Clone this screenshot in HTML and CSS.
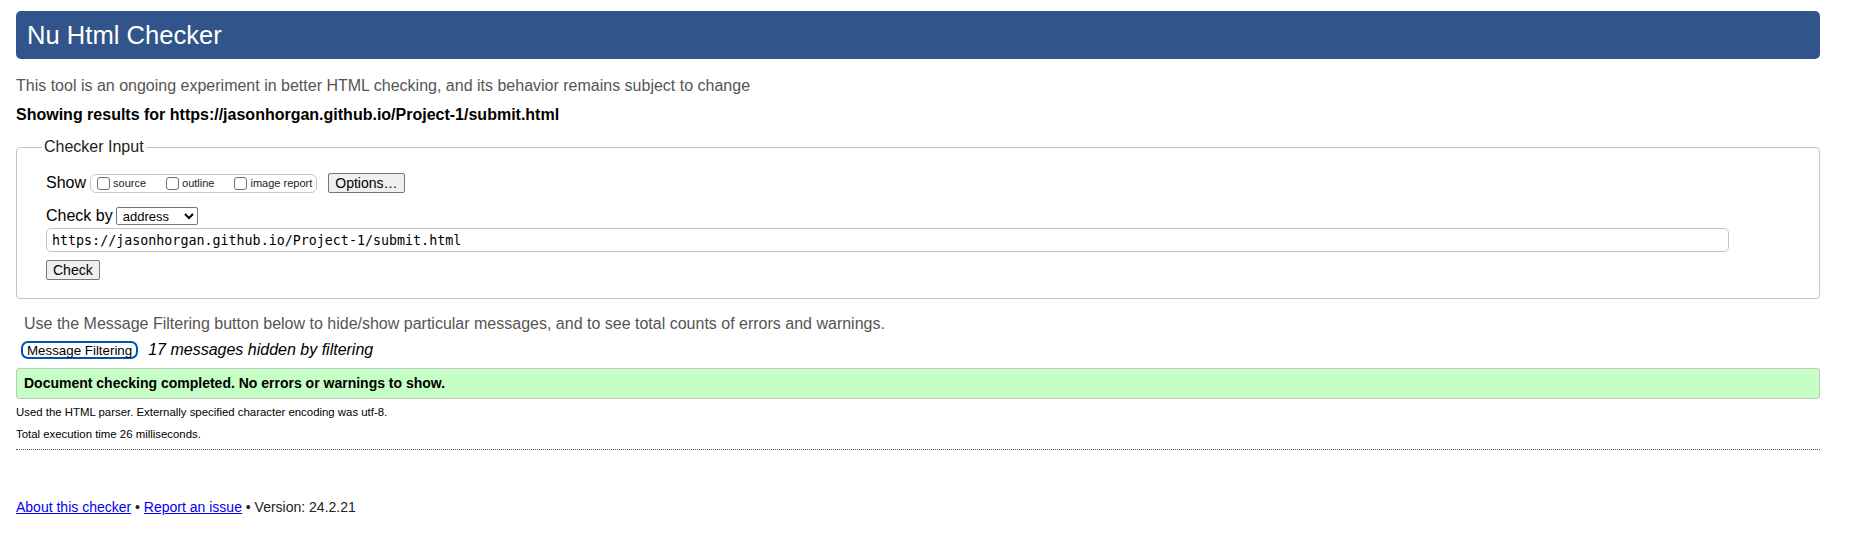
FILE: index.html
```html
<!DOCTYPE html>
<html lang="en">
<head>
<meta charset="utf-8">
<title>Nu Html Checker</title>
<link rel="stylesheet" href="styles.css">
</head>
<body>
<h1 class="title">Nu Html Checker</h1>
<p class="intro">This tool is an ongoing experiment in better HTML checking, and its behavior remains subject to change</p>
<p class="showing">Showing results for https://jasonhorgan.github.io/Project-1/submit.html</p>
<form class="checker">
  <fieldset class="input-box">
    <legend class="legend">Checker Input</legend>
    <div class="row show-row">
      <span class="lbl">Show</span>
      <span class="opts">
        <label class="opt"><input type="checkbox" class="cb"><span>source</span></label>
        <label class="opt"><input type="checkbox" class="cb"><span>outline</span></label>
        <label class="opt"><input type="checkbox" class="cb"><span>image report</span></label>
      </span>
      <button type="button" class="btn options">Options…</button>
    </div>
    <div class="row by-row">
      <span class="lbl">Check by</span>
      <select class="sel"><option>address</option></select>
    </div>
    <input class="url" type="text" value="https://jasonhorgan.github.io/Project-1/submit.html">
    <div class="row">
      <button type="button" class="btn check">Check</button>
    </div>
  </fieldset>
</form>
<p class="filter-note">Use the Message Filtering button below to hide/show particular messages, and to see total counts of errors and warnings.</p>
<div class="filter-row">
  <button type="button" class="filter-btn">Message Filtering</button>
  <em class="hidden-count">17 messages hidden by filtering</em>
</div>
<div class="success">Document checking completed. No errors or warnings to show.</div>
<p class="meta">Used the HTML parser. Externally specified character encoding was utf-8.</p>
<p class="meta">Total execution time 26 milliseconds.</p>
<hr class="rule">
<p class="footer"><a href="#">About this checker</a> • <a href="#">Report an issue</a> • Version: 24.2.21</p>
</body>
</html>
```
FILE: styles.css
```css
html { background: #fff; }
body {
  margin: 11px 35px 0 16px;
  font-family: "Liberation Sans", Arial, sans-serif;
  color: #000;
}
.title {
  margin: 0;
  height: 48px;
  line-height: 48px;
  padding: 0 11px;
  background: #31558b;
  color: #fff;
  border-radius: 5px;
  font-size: 25.6px;
  font-weight: normal;
}
.intro {
  margin: 0;
  padding-top: 17px;
  font-size: 16px;
  line-height: 20px;
  color: #555;
}
.showing {
  margin: 0;
  padding-top: 9px;
  font-size: 16px;
  line-height: 20px;
  font-weight: bold;
}
.checker { margin: 0; padding-top: 13px; }
.input-box {
  margin: 0;
  border: 1px solid #c4c4c4;
  border-radius: 4px;
  padding: 6px 90px 18px 29px;
  min-width: 0;
}
.legend {
  margin-left: -4px;
  padding: 0 2px;
  font-size: 16px;
  color: #222;
}
.row {
  display: flex;
  align-items: center;
}
.show-row { height: 22px; margin-top: 10px; }
.by-row { height: 20px; margin-top: 12px; }
.lbl { font-size: 16px; margin-right: 3px; }
.opts {
  display: inline-flex;
  align-items: center;
  box-sizing: border-box;
  height: 19px;
  border: 1px solid #c8c8c8;
  border-radius: 6px;
  padding: 0 4px 0 2px;
  margin-left: 1px;
  margin-right: 11px;
}
.opt {
  display: inline-flex;
  align-items: center;
  font-size: 11px;
  color: #222;
  margin-right: 16px;
}
.opt:last-child { margin-right: 0; }
.cb {
  -webkit-appearance: none;
  appearance: none;
  box-sizing: border-box;
  margin: 0 3px 0 4px;
  width: 13px;
  height: 13px;
  border: 1px solid #6f6f6f;
  border-radius: 3px;
  background: #fff;
}
.btn {
  font-family: "Liberation Sans", Arial, sans-serif;
  font-size: 14px;
  height: 20px;
  padding: 0 6px;
  background: #efefef;
  border: 1px solid #767676;
  border-radius: 2px;
  color: #000;
}
.sel {
  font-family: "Liberation Sans", Arial, sans-serif;
  font-size: 13px;
  width: 82px;
  height: 18px;
  padding: 0 2px;
  border: 1px solid #767676;
  border-radius: 2px;
  background: #fff;
  color: #000;
}
.url {
  display: block;
  box-sizing: border-box;
  width: 100%;
  height: 24px;
  margin-top: 2px;
  padding: 0 5px;
  border: 1px solid #c4c4c4;
  border-radius: 5px;
  font-family: "DejaVu Sans Mono", "Liberation Mono", monospace;
  font-size: 13.33px;
  color: #000;
}
.check { margin-top: 8px; }
.filter-note {
  margin: 0;
  padding: 15px 0 0 8px;
  font-size: 16px;
  line-height: 20px;
  color: #555;
}
.filter-row {
  display: flex;
  align-items: center;
  padding: 7px 0 0 5px;
}
.filter-btn {
  font-family: "Liberation Sans", Arial, sans-serif;
  font-size: 13.33px;
  height: 18px;
  padding: 0 4px;
  background: #fff;
  border: 2px solid #0050b8;
  border-radius: 7px;
  color: #000;
  margin-right: 10px;
}
.hidden-count { font-size: 16px; }
.success {
  margin-top: 9px;
  box-sizing: border-box;
  height: 31px;
  line-height: 29px;
  padding: 0 7px;
  background: #c5ffc5;
  border: 1px solid #c4c4c4;
  border-radius: 3px;
  font-size: 14px;
  font-weight: bold;
}
.meta {
  margin: 0;
  padding-top: 6px;
  font-size: 11.4px;
  line-height: 14px;
}
.meta + .meta { padding-top: 8px; }
.rule {
  margin: 8px 0 0 0;
  border: 0;
  border-top: 1px dotted #555;
  height: 0;
}
.footer {
  margin: 0;
  padding-top: 48px;
  font-size: 14px;
  line-height: 18px;
  color: #222;
}
.footer a { color: #0000ee; }
```
